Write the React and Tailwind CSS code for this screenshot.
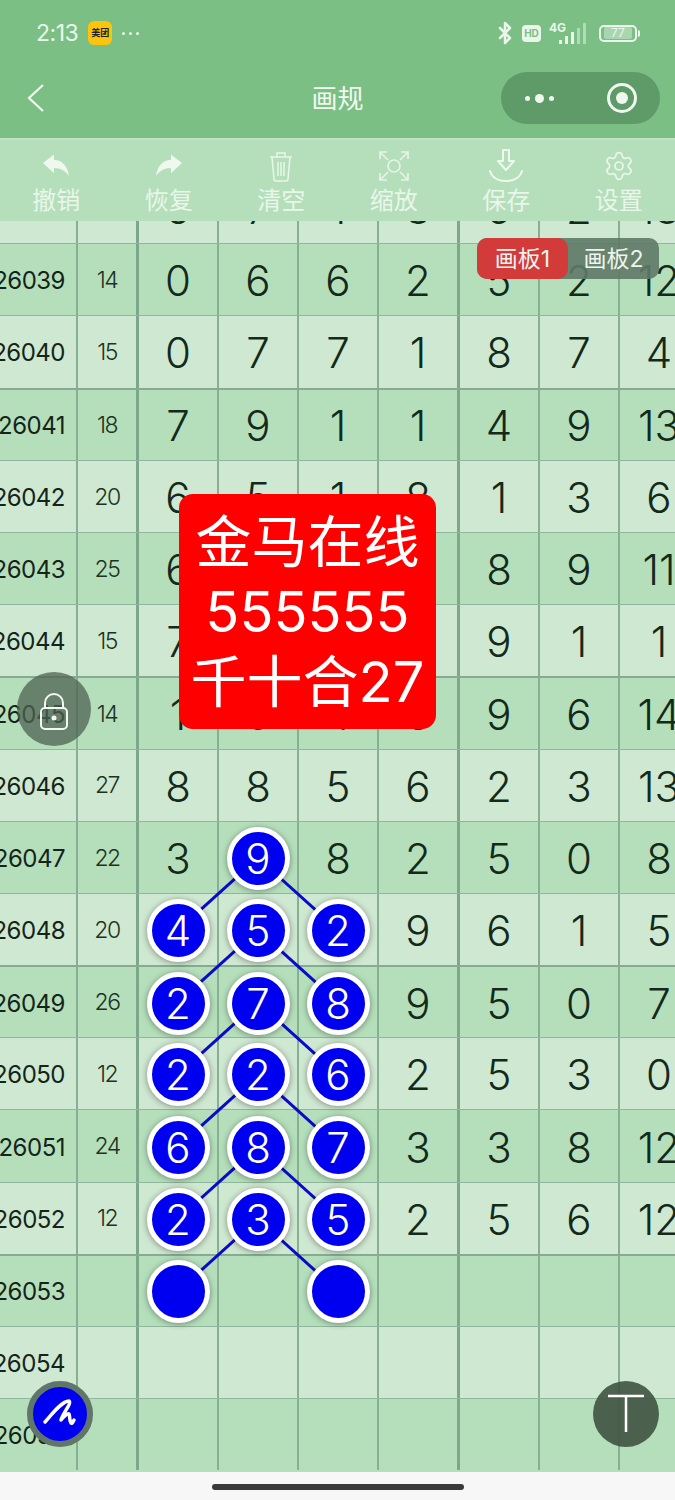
import React from 'react'
import { Bluetooth, Settings } from 'lucide-react'

const cjk = "font-['Inter','Noto_Sans_CJK_SC',sans-serif]"

const rows = [
  ['26038', '', ['6', '7', '1', '8', '5', '2', '13']],
  ['26039', '14', ['0', '6', '6', '2', '5', '2', '12']],
  ['26040', '15', ['0', '7', '7', '1', '8', '7', '4']],
  ['26041', '18', ['7', '9', '1', '1', '4', '9', '13']],
  ['26042', '20', ['6', '5', '1', '8', '1', '3', '6']],
  ['26043', '25', ['6', '2', '7', '3', '8', '9', '11']],
  ['26044', '15', ['7', '4', '2', '2', '9', '1', '1']],
  ['26045', '14', ['1', '3', '4', '6', '9', '6', '14']],
  ['26046', '27', ['8', '8', '5', '6', '2', '3', '13']],
  ['26047', '22', ['3', '*9', '8', '2', '5', '0', '8']],
  ['26048', '20', ['*4', '*5', '*2', '9', '6', '1', '5']],
  ['26049', '26', ['*2', '*7', '*8', '9', '5', '0', '7']],
  ['26050', '12', ['*2', '*2', '*6', '2', '5', '3', '0']],
  ['26051', '24', ['*6', '*8', '*7', '3', '3', '8', '12']],
  ['26052', '12', ['*2', '*3', '*5', '2', '5', '6', '12']],
  ['26053', '', ['*', '', '*', '', '', '', '']],
  ['26054', '', ['', '', '', '', '', '', '']],
  ['26055', '', ['', '', '', '', '', '', '']],
]

const ROW_H = 72.2

function UndoIcon({ flip }) {
  return (
    <svg width="32" height="32" viewBox="0 0 32 32" className={flip ? '-scale-x-100' : ''}>
      <path d="M3 13 14 4.500v5.200c8 .4 13.600 6 15 16.300-3.600-5.300-8.400-7.800-15-8v5.200z" fill="#eef8ef" />
    </svg>
  )
}

function TrashIcon() {
  return (
    <svg width="24" height="32" viewBox="0 0 24 32" fill="none" stroke="#e9f6ea" strokeWidth="1.500">
      <path d="M1 7h22M8 7V3h8v4M3 7l2 22c0 1 1 2 2 2h10c1 0 2-1 2-2l2-22M9 12v14M12 12v14M15 12v14" />
    </svg>
  )
}

function ScanIcon() {
  return (
    <svg width="32" height="32" viewBox="0 0 32 32" fill="none" stroke="#e6f4e7" strokeWidth="1.700">
      <circle cx="16" cy="16" r="6" />
      <path d="M2 9V2h7M23 2h7v7M30 23v7h-7M9 30H2v-7M3 3l7 7M29 3l-7 7M29 29l-7-7M3 29l7-7" />
    </svg>
  )
}

function SaveIcon() {
  return (
    <svg width="36" height="36" viewBox="0 0 36 36" fill="none" stroke="#eef8ef" strokeWidth="2">
      <path d="M15 2h6v11h5l-8 9-8-9h5z" strokeLinejoin="round" />
      <path d="M2 23c2 7 9 10 16 10s14-3 16-10" strokeLinecap="round" />
    </svg>
  )
}

function ToolItem({ icon, label }) {
  return (
    <div className="flex w-[113px] flex-col items-center">
      <div className="flex h-[36px] items-center justify-center">{icon}</div>
      <span className="mt-[1px] text-[24px] leading-[32px] text-[#e9f6ea]">{label}</span>
    </div>
  )
}

function StatusBar() {
  return (
    <div className="flex h-[66px] items-center pl-[36px] pr-[35px] text-[#eaf6eb]">
      <span className="text-[23px] tracking-[-0.5px]">2:13</span>
      <div className="ml-[10px] flex h-[24px] w-[24px] items-center justify-center rounded-[6px] bg-[#fcc50c] text-[9px] font-bold text-[#222]">美团</div>
      <div className="ml-[10px] flex gap-[4px]">
        <div className="h-[3px] w-[3px] rounded-full bg-[#eaf6eb]" />
        <div className="h-[3px] w-[3px] rounded-full bg-[#eaf6eb]" />
        <div className="h-[3px] w-[3px] rounded-full bg-[#eaf6eb]" />
      </div>
      <div className="ml-auto flex items-center">
        <Bluetooth size={24} strokeWidth={2.500} />
        <div className="ml-[5px] flex h-[17px] w-[19px] items-center justify-center rounded-[4px] bg-[#eaf6eb] text-[10px] font-bold text-[#7bbf85]">HD</div>
        <div className="relative ml-[8px] h-[24px] w-[41px]">
          <span className="absolute -top-[2px] left-0 text-[12px] font-bold">4G</span>
          <svg width="41" height="24" viewBox="0 0 41 24" fill="#eaf6eb">
            <rect x="10" y="19" width="3" height="4" />
            <rect x="16" y="15" width="3" height="8" />
            <rect x="22" y="11" width="3" height="12" />
            <rect x="28" y="7" width="3" height="16" opacity=".5" />
            <rect x="34" y="2" width="3" height="21" opacity=".5" />
          </svg>
        </div>
        <div className="ml-[9px] flex h-[17px] w-[38px] items-center justify-center rounded-[5px] border-2 border-[#eaf6eb] text-[12px] leading-none">
          <span className="w-[28px] rounded-[2px] bg-[#a8d6ae] text-center text-[#eaf6eb]">77</span>
        </div>
        <div className="ml-[1px] h-[7px] w-[2px] rounded-r-[2px] bg-[#eaf6eb]" />
      </div>
    </div>
  )
}

function Cell({ value, idx }) {
  const isNode = value.startsWith('*')
  const text = isNode ? value.slice(1) : value
  const border = idx === 3 ? 'border-r-[3px] border-r-[#7da78a]' : 'border-r-2 border-r-[#86af93]'
  return (
    <div className={`flex items-center justify-center pt-[2px] ${border}`}>
      {isNode ? (
        <div className="relative z-10 flex h-[63px] w-[63px] shrink-0 items-center justify-center rounded-full border-[5px] border-white bg-[#0000f0] text-[42px] font-light text-white shadow-[0_1px_6px_rgba(0,0,0,0.4)]">
          {text}
        </div>
      ) : (
        <span className="text-[42px] font-light text-[#13291a]">{text}</span>
      )}
    </div>
  )
}

function Row({ row, i }) {
  const thick = i % 4 === 3
  const bg = i % 2 === 1 ? 'bg-[#b5dfbb]' : 'bg-[#cfe8d1]'
  const line = thick ? 'border-t-2 border-t-[#86ab92]' : 'border-t border-t-[#8fb79b]'
  return (
    <div
      className={`grid shrink-0 grid-cols-[78px_61px_80px_80px_80px_81px_80px_80px_80px] ${bg} ${line}`}
      style={{ height: ROW_H }}
    >
      <div className="flex items-center justify-end overflow-hidden border-r-2 border-r-[#86af93] pr-[11px] pt-[3px] text-[24px] tracking-[-0.5px] text-[#14241a]">{row[0]}</div>
      <div className="flex items-center justify-center border-r-[3px] border-r-[#7da78a] pt-[1px] text-[23px] font-light tracking-[-1.5px] text-[#1c3323]">{row[1]}</div>
      {row[2].map((v, k) => <Cell key={k} value={v} idx={k} />)}
    </div>
  )
}

function Lines() {
  const top = 637
  const segs = []
  for (let i = 0; i < 6; i++) {
    const y = top + i * ROW_H
    segs.push([258, y, 178, y + ROW_H], [258, y, 338, y + ROW_H])
  }
  return (
    <svg className="absolute left-0 top-0" width="675" height="1251">
      {segs.map((s, i) => (
        <line key={i} x1={s[0]} y1={s[1]} x2={s[2]} y2={s[3]} stroke="#0a0ac8" strokeWidth="3" />
      ))}
    </svg>
  )
}

export default function App() {
  return (
    <div className={`relative flex h-[1500px] w-[675px] flex-col overflow-hidden bg-[#f7f7f7] ${cjk}`}>
      <div className="h-[138px] shrink-0 bg-[#7bbf85]">
        <StatusBar />
        <div className="mt-[6px] grid h-[52px] grid-cols-[1fr_auto_1fr] items-center px-[15px]">
          <svg width="20" height="30" viewBox="0 0 20 30" fill="none" stroke="#f1f9f1" strokeWidth="2.200" className="ml-[11px]">
            <path d="M17 2 3 15l14 13" />
          </svg>
          <span className="text-[26px] text-[#f1f9f1]">画规</span>
          <div className="flex h-[52px] w-[159px] items-center justify-between justify-self-end rounded-full bg-[#5e9b69] pl-[24px] pr-[23px]">
            <div className="flex items-center gap-[5px]">
              <div className="h-[5px] w-[5px] rounded-full bg-[#eef8ef]" />
              <div className="h-[9px] w-[9px] rounded-full bg-[#eef8ef]" />
              <div className="h-[5px] w-[5px] rounded-full bg-[#eef8ef]" />
            </div>
            <div className="flex h-[30px] w-[30px] items-center justify-center rounded-full border-[3px] border-[#eef8ef]">
              <div className="h-[12px] w-[12px] rounded-full bg-[#eef8ef]" />
            </div>
          </div>
        </div>
      </div>

      <div className="flex h-[83px] shrink-0 items-start border-t-2 border-t-[#c0e3c4] bg-[#b5dfbb] pt-[8px]">
        <ToolItem icon={<UndoIcon />} label="撤销" />
        <ToolItem icon={<UndoIcon flip />} label="恢复" />
        <ToolItem icon={<TrashIcon />} label="清空" />
        <ToolItem icon={<ScanIcon />} label="缩放" />
        <ToolItem icon={<SaveIcon />} label="保存" />
        <ToolItem icon={<Settings size={32} strokeWidth={1.300} color="#e9f6ea" />} label="设置" />
      </div>

      <div className="relative h-[1251px] shrink-0 overflow-hidden bg-[#b5dfbb]">
        <div className="-mt-[50px] flex flex-col">
          {rows.map((row, i) => <Row key={row[0]} row={row} i={i} />)}
        </div>
        <Lines />
      </div>

      <div className="flex flex-1 items-center justify-center">
        <div className="mt-[2px] h-[6px] w-[252px] rounded-full bg-[#3a3a3a]" />
      </div>

      {/* tabs */}
      <div className="absolute left-[477px] top-[238px] z-20 flex h-[41px] w-[182px] rounded-[10px] bg-[#5f7a68]/90 pt-[2px] text-[23px] text-[#eef5ef]">
        <div className="-mt-[2px] flex w-[91px] items-center justify-center rounded-[10px] bg-[#d33a3a] pt-[2px]">画板1</div>
        <div className="flex flex-1 items-center justify-center">画板2</div>
      </div>

      {/* red notice */}
      <div className="absolute left-[179px] top-[494px] z-20 flex h-[235px] w-[257px] flex-col items-center justify-center rounded-[14px] bg-[#ff0000] text-[56px] leading-[70px] whitespace-nowrap text-white">
        <span>金马在线</span>
        <span>555555</span>
        <span>千十合27</span>
      </div>

      {/* lock */}
      <div className="absolute left-[17px] top-[672px] z-20 flex h-[74px] w-[74px] items-center justify-center rounded-full bg-[#4e6152]/75">
        <svg width="30" height="40" viewBox="0 0 30 38" fill="none" stroke="#f2f7f2" strokeWidth="2" className="mt-[6px]">
          <path d="M6 15V10a9 9 0 0 1 18 0v5" />
          <rect x="2" y="15" width="26" height="21" rx="4" />
          <circle cx="15" cy="25" r="2.500" fill="#f2f7f2" stroke="none" />
        </svg>
      </div>

      {/* pen */}
      <div className="absolute left-[27px] top-[1381px] z-20 flex h-[66px] w-[66px] items-center justify-center rounded-full border-[6px] border-[#5f7668] bg-[#0000f0]">
        <svg width="36" height="34" viewBox="0 0 36 34" fill="none" stroke="#fff" strokeWidth="3.500" strokeLinecap="round" strokeLinejoin="round">
          <path d="M3 25C10 17 20 4 27 4c3 2-6 12-8 19 3-4 7-7 8-6s0 6 2 9c1 1 2-1 3-3" />
        </svg>
      </div>

      {/* T */}
      <div className="absolute left-[593px] top-[1381px] z-20 flex h-[66px] w-[66px] items-center justify-center rounded-full bg-[#3f5341]/90">
        <svg width="38" height="40" viewBox="0 0 38 40" fill="none" stroke="#fff" strokeWidth="2.500">
          <path d="M1 2h36M19 2v36" />
        </svg>
      </div>
    </div>
  )
}
